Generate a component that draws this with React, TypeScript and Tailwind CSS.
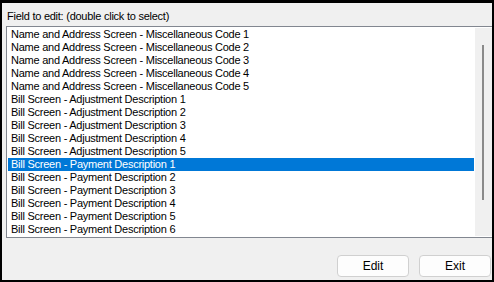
const items = [
  'Name and Address Screen - Miscellaneous Code 1',
  'Name and Address Screen - Miscellaneous Code 2',
  'Name and Address Screen - Miscellaneous Code 3',
  'Name and Address Screen - Miscellaneous Code 4',
  'Name and Address Screen - Miscellaneous Code 5',
  'Bill Screen - Adjustment Description 1',
  'Bill Screen - Adjustment Description 2',
  'Bill Screen - Adjustment Description 3',
  'Bill Screen - Adjustment Description 4',
  'Bill Screen - Adjustment Description 5',
  'Bill Screen - Payment Description 1',
  'Bill Screen - Payment Description 2',
  'Bill Screen - Payment Description 3',
  'Bill Screen - Payment Description 4',
  'Bill Screen - Payment Description 5',
  'Bill Screen - Payment Description 6',
];

const selected = 10;

export default function App() {
  return (
    <div className="w-[494px] h-[282px] bg-black pt-[3px] px-[2px] pb-[2px] font-['Liberation_Sans',Arial,sans-serif] text-[11px] tracking-[-0.25px] text-black">
      <div className="h-full bg-[#f0f0f0] flex flex-col">
        {/* Label */}
        <div className="mt-[7px] h-[13px] leading-[13px] pl-[5px]">Field to edit: (double click to select)</div>

        {/* List box */}
        <div className="mt-[3px] ml-[4px] w-[486px] h-[212px] bg-white border-l border-t border-b border-[#828790] flex py-[1px] pl-[1px]">
          <div className="w-[466px] flex flex-col">
            {items.map((item, i) => (
              <div
                key={item}
                className={`h-[13px] leading-[13px] pl-[3px] whitespace-nowrap ${
                  i === selected ? 'bg-[#0078d7] text-white' : ''
                }`}
              >
                {item}
              </div>
            ))}
          </div>
          {/* Scrollbar */}
          <div className="ml-[1px] w-[17px] bg-[#f0f0f0] pt-[17px]">
            <div className="ml-[7px] w-[2px] h-[155px] bg-[#8a8a8a]" />
          </div>
        </div>

        {/* Buttons */}
        <div className="mt-[17px] flex justify-end gap-[10px] pr-[1px]">
          <button className="w-[72px] h-[22px] rounded-[4px] border border-[#d0d0d0] bg-[#fdfdfd] text-[12px] leading-[20px] tracking-normal">
            Edit
          </button>
          <button className="w-[72px] h-[22px] rounded-[4px] border border-[#d0d0d0] bg-[#fdfdfd] text-[12px] leading-[20px] tracking-normal">
            Exit
          </button>
        </div>
      </div>
    </div>
  );
}
